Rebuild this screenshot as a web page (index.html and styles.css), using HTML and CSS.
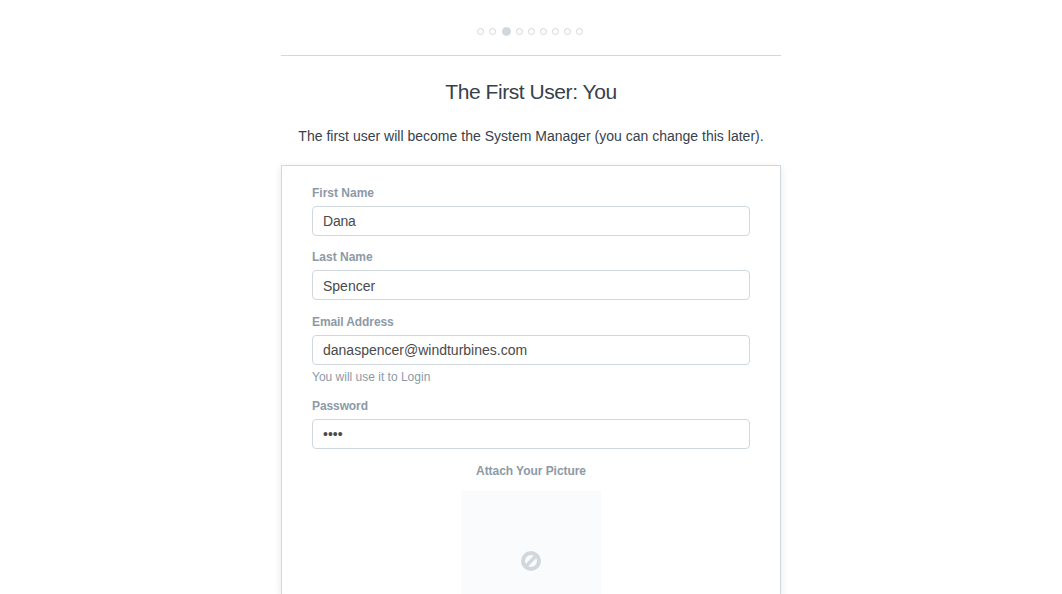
FILE: index.html
```
<!DOCTYPE html>
<html lang="en">
<head>
<meta charset="utf-8">
<title>Setup Wizard</title>
<link rel="stylesheet" href="styles.css">
</head>
<body>
<main class="wizard">
  <div class="progress">
    <i class="dot"></i><i class="dot"></i><i class="dot active"></i><i class="dot"></i><i class="dot"></i><i class="dot"></i><i class="dot"></i><i class="dot"></i><i class="dot"></i>
  </div>
  <h1 class="title">The First User: You</h1>
  <p class="lead">The first user will become the System Manager (you can change this later).</p>
  <form class="card">
    <div class="group"><label class="label">First Name</label><div class="input dana">Dana</div></div>
    <div class="group last-name"><label class="label">Last Name</label><div class="input spencer">Spencer</div></div>
    <div class="group"><label class="label email-label">Email Address</label><div class="input">danaspencer@windturbines.com</div><p class="help">You will use it to Login</p></div>
    <div class="group password"><label class="label email-label">Password</label><div class="input dots">••••</div></div>
    <div class="attach">
      <label class="label attach-label">Attach Your Picture</label>
      <div class="picture">
        <svg class="ban" width="20" height="20" viewBox="0 0 20 20" fill="none" stroke="#d1d8dd" stroke-width="4"><circle cx="10" cy="10" r="8"/><path d="M4.8 15.2 15.2 4.8" stroke-width="3.4"/></svg>
      </div>
    </div>
  </form>
</main>
</body>
</html>
```
FILE: styles.css
```
* { box-sizing: border-box; }
body {
  margin: 0;
  height: 594px;
  overflow: hidden;
  background: #fff;
  color: #36414c;
  font-family: "Liberation Sans", Arial, sans-serif;
  font-size: 14px;
}
.wizard { width: 500px; height: 594px; margin: 0 auto; display: flex; flex-direction: column; }
.progress {
  flex: none;
  height: 56px;
  padding: 7px 2px 0 0;
  border-bottom: 1px solid #d1d8dd;
  display: flex;
  justify-content: center;
  align-items: center;
  gap: 5px;
}
.dot { width: 7px; height: 7px; border: 1.5px solid #d1d8dd; border-radius: 50%; }
.dot.active { width: 9px; height: 9px; margin: 0 0.5px; background: #d1d8dd; }
.title {
  margin: 22px 0 0;
  font-size: 21px;
  font-weight: 400;
  line-height: 28px;
  text-align: center;
  letter-spacing: -0.44px;
}
.lead { margin: 20px 0 19px; line-height: 20px; text-align: center; white-space: nowrap; letter-spacing: 0.01px; }
.card {
  flex: 1;
  min-height: 0;
  overflow: hidden;
  padding: 19px 30px 0;
  border: 1px solid #d1d8dd;
  border-bottom: 0;
  box-shadow: 0 3px 8px rgba(0, 0, 0, 0.1);
}
.group { margin-bottom: 13px; }
.group.last-name, .group.password { margin-bottom: 14px; }
.label {
  display: block;
  margin-bottom: 4px;
  color: #8d99a6;
  font-size: 12px;
  font-weight: 700;
  line-height: 17px;
}
.email-label { letter-spacing: -0.1px; }
.input {
  height: 30px;
  padding: 0 10px;
  border: 1px solid #d1d8dd;
  border-radius: 4px;
  color: #4a4a4a;
  line-height: 29px;
}
.dana { letter-spacing: -0.2px; }
.spencer { line-height: 30px; }
.help { margin: 4px 0 0; color: #8d99a6; font-size: 12px; line-height: 16px; }
.attach { display: flex; flex-direction: column; align-items: center; }
.attach-label { margin-bottom: 11px; letter-spacing: -0.05px; }
.picture {
  width: 140px;
  height: 104px;
  padding-top: 60px;
  background: #fafbfc;
  text-align: center;
}
.ban { display: block; margin: 0 auto; }
```
